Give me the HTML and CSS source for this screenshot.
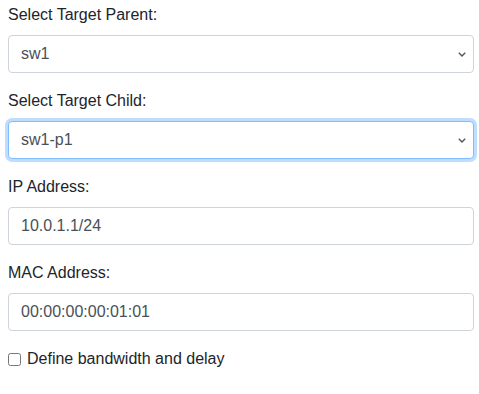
FILE: index.html
```html
<!DOCTYPE html>
<html lang="en">
<head>
  <meta charset="UTF-8">
  <meta name="viewport" content="width=device-width, initial-scale=1.0">
  <title>Link Settings</title>
  <link rel="stylesheet" href="styles.css">
</head>
<body>
  <form class="link-form">
    <div class="form-group">
      <label for="parentSelect">Select Target Parent:</label>
      <select id="parentSelect" class="form-control">
        <option>sw1</option>
        <option>sw2</option>
      </select>
    </div>
    <div class="form-group">
      <label for="childSelect">Select Target Child:</label>
      <select id="childSelect" class="form-control focused">
        <option>sw1-p1</option>
        <option>sw1-p2</option>
      </select>
    </div>
    <div class="form-group">
      <label for="ipInput">IP Address:</label>
      <input type="text" id="ipInput" class="form-control" value="10.0.1.1/24">
    </div>
    <div class="form-group">
      <label for="macInput">MAC Address:</label>
      <input type="text" id="macInput" class="form-control" value="00:00:00:00:01:01">
    </div>
    <div class="check-row">
      <input type="checkbox" id="bwCheck">
      <label for="bwCheck">Define bandwidth and delay</label>
    </div>
  </form>
</body>
</html>
```

FILE: styles.css
```css
body {
    font-family: "Liberation Sans", Arial, sans-serif;
    font-size: 16px;
    line-height: 1.5;
    color: #212529;
    background-color: #fff;
    margin: 0;
    padding: 3px 5px 0 8px;
}

.form-group {
    margin-bottom: 16px;
}

.form-group label {
    display: inline-block;
    margin-bottom: 8px;
}

.form-control {
    display: block;
    width: 100%;
    height: 38px;
    padding: 6px 12px;
    box-sizing: border-box;
    font-family: inherit;
    font-size: 16px;
    line-height: 1.5;
    color: #495057;
    background-color: #fff;
    border: 1px solid #ced4da;
    border-radius: 4px;
    outline: none;
    margin: 0;
}

select.form-control {
    appearance: none;
    -webkit-appearance: none;
    background-image: url("data:image/svg+xml,%3Csvg xmlns='http://www.w3.org/2000/svg' width='8' height='5' viewBox='0 0 8 5'%3E%3Cpath d='M0.8 0.8L4 4L7.2 0.8' fill='none' stroke='%23555' stroke-width='1.4'/%3E%3C/svg%3E");
    background-repeat: no-repeat;
    background-position: right 7px center;
    background-size: 8px 5px;
}

.form-control.focused {
    border-color: #80bdff;
    box-shadow: 0 0 0 3px rgba(0, 123, 255, 0.25);
}

.check-row {
    display: flex;
    align-items: center;
    height: 24px;
}

.check-row input[type="checkbox"] {
    width: 13px;
    height: 13px;
    margin: 0 6px 0 0;
}
```
